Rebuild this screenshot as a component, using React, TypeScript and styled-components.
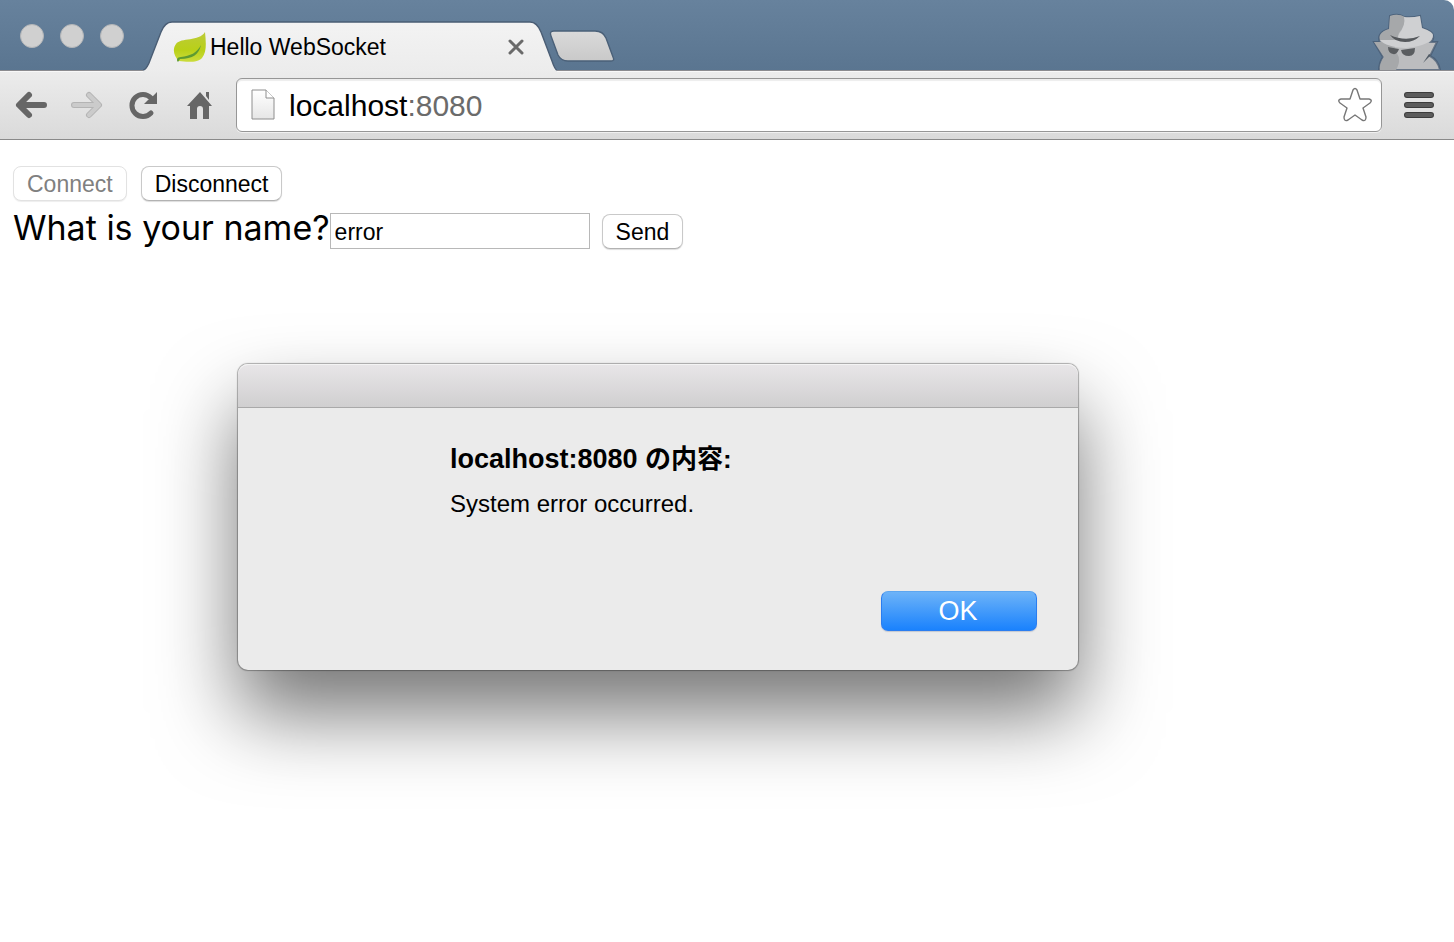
import React, { useState } from 'react';
import styled, { createGlobalStyle } from 'styled-components';

const GlobalStyle = createGlobalStyle`
  *, *::before, *::after { box-sizing: border-box; }
  html, body, #root { height: 100%; }
  body { margin: 0; background: #fff; }
  button, input { font: inherit; color: inherit; }
`;

const sans = `"Liberation Sans", Arial, "Noto Sans CJK JP", sans-serif`;

const BrowserWindow = styled.div`
  position: relative;
  display: flex;
  flex-direction: column;
  min-height: 100%;
  overflow: hidden;
  border-radius: 0 10px 10px 0;
  background: #fff;
  color: #000;
  font-family: ${sans};
`;

const TitleBar = styled.header`
  display: flex;
  height: 70px;
  background: linear-gradient(#67829d, #5a7590);
`;

const TrafficLights = styled.div`
  display: flex;
  flex: none;
  gap: 16px;
  padding: 24px 20px 0;
`;

const TrafficLight = styled.button`
  width: 24px;
  height: 24px;
  padding: 0;
  border: 1px solid #b4b6b8;
  border-radius: 50%;
  background: #d0d0d0;
`;

const Tab = styled.div`
  position: relative;
  z-index: 1;
  display: flex;
  flex: none;
  align-items: center;
  width: 414px;
  height: 51px;
  margin-top: 21px;
  margin-left: -1px;
  padding: 0 32px 0 30px;
`;

const TabShape = styled.svg`
  position: absolute;
  inset: 0;
`;

const TabTitle = styled.span`
  position: relative;
  flex: 1;
  padding-left: 3px;
  font-size: 23px;
  line-height: 28px;
  white-space: nowrap;
`;

const IconButton = styled.button`
  position: relative;
  display: flex;
  flex: none;
  padding: 0;
  border: 0;
  background: none;
`;

const NewTabButton = styled(IconButton)`
  align-self: flex-start;
  margin: 29px auto 0 -8px;
`;

const Leaf = styled.svg`
  position: relative;
  flex: none;
`;

const Incognito = styled.svg`
  flex: none;
  align-self: flex-end;
  margin-right: 8px;
`;

const Toolbar = styled.nav`
  display: flex;
  align-items: center;
  height: 70px;
  padding: 0 19px 0 14px;
  border-top: 1px solid #8b8b8f;
  border-bottom: 1px solid #8a8a8a;
  background: linear-gradient(#ececec, #dadada);
  box-shadow: inset 0 1px 0 #f8f8f8;
`;

const NavButtons = styled.div`
  display: flex;
  flex: none;
  gap: 20px;
  margin-right: 18px;
`;

const AddressBar = styled.div`
  display: flex;
  flex: 1;
  align-items: center;
  height: 54px;
  margin-right: 21px;
  padding: 0 8px 0 14px;
  border: 1px solid #969696;
  border-radius: 6px;
  background: #fff;
  box-shadow: inset 0 2px 1px #ededed, 0 1px 0 #f0f0f0;
`;

const Url = styled.div`
  flex: 1;
  padding: 2px 0 0 14px;
  font-size: 30px;
  line-height: 34px;
  span { color: #6b6b6b; }
`;

const Page = styled.main`
  flex: 1;
  padding: 26px 13px;
`;

const ButtonRow = styled.div`
  display: flex;
  gap: 14px;
  margin-bottom: 12px;
`;

const NameForm = styled.form`
  display: flex;
  align-items: center;
`;

const NameLabel = styled.label`
  margin-top: -6px;
  font-family: Inter, "Noto Sans CJK JP", sans-serif;
  font-size: 34px;
  font-weight: 400;
  line-height: 36px;
  white-space: nowrap;
`;

const NameInput = styled.input`
  width: 260px;
  height: 36px;
  margin-right: 12px;
  padding: 2px 4px 0;
  border: 1px solid #b8b8b8;
  border-radius: 0;
  background: #fff;
  font-size: 23px;
  outline: none;
`;

const PushButton = styled.button`
  height: 35px;
  padding: 0 13px;
  border: 1px solid #c9c9c9;
  border-bottom-color: #b2b2b2;
  border-radius: 8px;
  background: #fff;
  box-shadow: 0 1px 1px #ddd;
  font-size: 23px;
  line-height: 34px;
  &:disabled {
    border-color: #e2e2e2;
    box-shadow: 0 1px 1px #eee;
    color: #808080;
  }
`;

const Dialog = styled.section`
  position: absolute;
  top: 364px;
  left: 238px;
  width: 840px;
  border-radius: 10px;
  background: #ebebeb;
  box-shadow: 0 0 1px 1px rgba(0, 0, 0, 0.3), 0 44px 80px rgba(0, 0, 0, 0.54);
`;

const DialogBar = styled.div`
  height: 44px;
  border-bottom: 1px solid #a9a9a9;
  border-radius: 10px 10px 0 0;
  background: linear-gradient(#e8e6e8, #d0cfd0);
  box-shadow: inset 0 1px 0 #f4f4f4;
`;

const DialogBody = styled.div`
  display: flex;
  flex-direction: column;
  padding: 32px 41px 39px 212px;
`;

const DialogTitle = styled.h1`
  margin: 0 0 10px;
  font-size: 27px;
  line-height: 38px;
  span { font-size: 26px; }
`;

const Message = styled.p`
  margin: 0 0 71px;
  font-size: 24px;
  line-height: 32px;
`;

const OkButton = styled.button`
  align-self: flex-end;
  width: 156px;
  height: 40px;
  padding: 0 2px 0 0;
  border: 1px solid #2a7df0;
  border-top-color: #5da6f0;
  border-radius: 7px;
  background: linear-gradient(#6db3f8, #1a82fd);
  box-shadow: 0 1px 1px #c4c8d0;
  color: #fff;
  font-size: 27px;
  line-height: 38px;
`;

export default function App() {
  const [name, setName] = useState('error');
  return (
    <>
      <GlobalStyle />
      <BrowserWindow>
        <TitleBar>
          <TrafficLights>
            <TrafficLight aria-label="Close" />
            <TrafficLight aria-label="Minimize" />
            <TrafficLight aria-label="Zoom" />
          </TrafficLights>
          <Tab>
            <TabShape width="414" height="51" viewBox="0 0 414 51" aria-hidden="true">
              <defs>
                <linearGradient id="tab" x2="0" y2="1">
                  <stop offset="0" stopColor="#f3f3f3" />
                  <stop offset="1" stopColor="#ececec" />
                </linearGradient>
              </defs>
              <path d="M0 51V49C3 49 4 46 6 42L18 11Q22 1 29 1H387Q394 1 398 11L409 40Q412 49 414 49V51Z" fill="url(#tab)" />
              <path d="M0 49C3 49 4 46 6 42L18 11Q22 1 29 1H387Q394 1 398 11L409 40Q412 49 414 49" fill="none" stroke="#4a5d74" strokeWidth="1.4" />
            </TabShape>
            <Leaf width="34" height="34" viewBox="0 0 34 34" aria-hidden="true">
              <defs>
                <linearGradient id="leaf" x2="0" y2="1">
                  <stop offset="0" stopColor="#bccb3a" />
                  <stop offset=".6" stopColor="#b9d018" />
                  <stop offset="1" stopColor="#cbdc3c" />
                </linearGradient>
              </defs>
              <path d="M32 2C33 12 34 22 29 28C25 33 13 32 6 31C1 27-1 19 3 14C8 7 26 12 32 2Z" fill="url(#leaf)" />
              <path d="M5 32C3 30 4 27 8 27C17 26 24 23 28 15C26 24 20 29 7 29Z" fill="#5d9a32" />
            </Leaf>
            <TabTitle>Hello WebSocket</TabTitle>
            <IconButton aria-label="Close tab">
              <svg width="18" height="18" viewBox="0 0 18 18">
                <path d="M3 3L15 15M15 3L3 15" stroke="#6a6a6a" strokeWidth="3" strokeLinecap="round" />
              </svg>
            </IconButton>
          </Tab>
          <NewTabButton aria-label="New tab">
            <svg width="66" height="35" viewBox="0 0 66 35">
              <defs>
                <linearGradient id="newtab" x2="0" y2="1">
                  <stop offset="0" stopColor="#dadada" />
                  <stop offset="1" stopColor="#c9c9c9" />
                </linearGradient>
              </defs>
              <path d="M5 2H46Q54 2 57 9L64 28Q66 32 62 32H19Q12 32 9 26L2 7Q0 2 5 2Z" fill="url(#newtab)" stroke="#4a6078" strokeWidth="1.4" />
            </svg>
          </NewTabButton>
          <Incognito width="76" height="60" viewBox="1370 10 76 60" aria-label="Incognito" role="img">
            <path d="M1374 42H1380Q1376 33 1389 29L1390 16Q1398 13 1404 17Q1412 18 1420 16L1422 28Q1434 32 1433 36Q1434 39 1431 42H1437L1430 56Q1438 60 1440 70H1379Q1379 63 1383 57Z" fill="#bcbdbf" stroke="#445970" strokeOpacity=".7" strokeWidth="2" />
            <path d="M1390 16Q1398 13 1405 17Q1406 25 1399 33L1394 50Q1403 58 1396 70H1380Q1379 64 1384 57L1374 42H1381Q1376 33 1389 29Z" fill="#a6a8aa" />
            <path d="M1404 17Q1412 18 1420 16L1422 28Q1434 32 1433 36Q1432 45 1406 48Q1386 47 1380 40H1397L1399 34Q1406 25 1404 17Z" fill="#cfd0d2" />
            <path d="M1390 35Q1405 42 1420 36Q1414 42 1405 42Q1395 42 1390 35Z" fill="#55585c" />
            <path d="M1388 47Q1393 48 1399 49Q1397 55 1393 54Q1388 53 1388 47ZM1401 50Q1408 49 1415 48Q1415 56 1409 56Q1402 56 1401 50Z" fill="#5a5d60" />
            <path d="M1431 55L1423 63L1429 54Z" fill="#505a64" />
          </Incognito>
        </TitleBar>
        <Toolbar aria-label="Browser">
          <NavButtons>
            <IconButton aria-label="Back">
              <svg width="36" height="36" viewBox="0 0 36 36">
                <path d="M15 8L5 18L15 28M6 18H30" fill="none" stroke="#666" strokeWidth="6" strokeLinecap="round" strokeLinejoin="round" />
              </svg>
            </IconButton>
            <IconButton aria-label="Forward" disabled>
              <svg width="36" height="36" viewBox="0 0 36 36">
                <path d="M19 8L29 18L19 28M28 18H4" fill="none" stroke="#b4b4b4" strokeWidth="6" strokeLinecap="round" strokeLinejoin="round" />
                <path d="M19 8L29 18L19 28M28 18H4" fill="none" stroke="#cbcbcb" strokeWidth="4" strokeLinecap="round" strokeLinejoin="round" />
              </svg>
            </IconButton>
            <IconButton aria-label="Reload">
              <svg width="36" height="36" viewBox="0 0 36 36">
                <path d="M25 11A11 11 0 1 0 25 26" fill="none" stroke="#666" strokeWidth="5" strokeLinecap="round" />
                <path d="M31 5V17H18L22 13L26 10Z" fill="#666" />
              </svg>
            </IconButton>
            <IconButton aria-label="Home">
              <svg width="36" height="36" viewBox="0 0 36 36">
                <path d="M18 5L30 19H27V32H21V22Q21 19 18 19Q15 19 15 22V32H8V19H5ZM24 5H27V13L24 9Z" fill="#666" />
              </svg>
            </IconButton>
          </NavButtons>
          <AddressBar>
            <svg width="24" height="32" viewBox="0 0 24 32" aria-hidden="true">
              <defs>
                <linearGradient id="doc" x2="0" y2="1">
                  <stop offset="0" stopColor="#fff" />
                  <stop offset="1" stopColor="#e6e6e6" />
                </linearGradient>
              </defs>
              <path d="M1 1H15L23 9V30H1Z" fill="url(#doc)" stroke="#8e8e8e" />
              <path d="M15 1V9H23" fill="#fff" stroke="#8e8e8e" />
            </svg>
            <Url>localhost<span>:8080</span></Url>
            <IconButton aria-label="Bookmark this page">
              <svg width="36" height="36" viewBox="0 0 36 36">
                <path d="M16 3Q18 0 20 3L23 12H32Q36 13 33 16L26 21L29 30Q29 35 25 33L18 28L11 33Q7 35 7 30L10 21L3 16Q0 13 4 12H13Z" fill="#fff" stroke="#777" strokeWidth="1.4" strokeLinejoin="round" />
              </svg>
            </IconButton>
          </AddressBar>
          <IconButton aria-label="Menu">
            <svg width="32" height="28" viewBox="0 0 32 28">
              <path d="M4 4H28M4 14H28M4 24H28" stroke="#3c3c3c" strokeWidth="6" strokeLinecap="round" />
              <path d="M4 4H28M4 14H28M4 24H28" stroke="#5c5c5c" strokeWidth="4" strokeLinecap="round" />
            </svg>
          </IconButton>
        </Toolbar>
        <Page>
          <ButtonRow>
            <PushButton disabled>Connect</PushButton>
            <PushButton>Disconnect</PushButton>
          </ButtonRow>
          <NameForm onSubmit={(e) => e.preventDefault()}>
            <NameLabel htmlFor="name">What is your name?</NameLabel>
            <NameInput id="name" value={name} onChange={(e) => setName(e.target.value)} />
            <PushButton>Send</PushButton>
          </NameForm>
        </Page>
        <Dialog role="alertdialog" aria-labelledby="dialog-title" aria-describedby="dialog-message">
          <DialogBar />
          <DialogBody>
            <DialogTitle id="dialog-title">localhost:8080 <span>の内容:</span></DialogTitle>
            <Message id="dialog-message">System error occurred.</Message>
            <OkButton>OK</OkButton>
          </DialogBody>
        </Dialog>
      </BrowserWindow>
    </>
  );
}
